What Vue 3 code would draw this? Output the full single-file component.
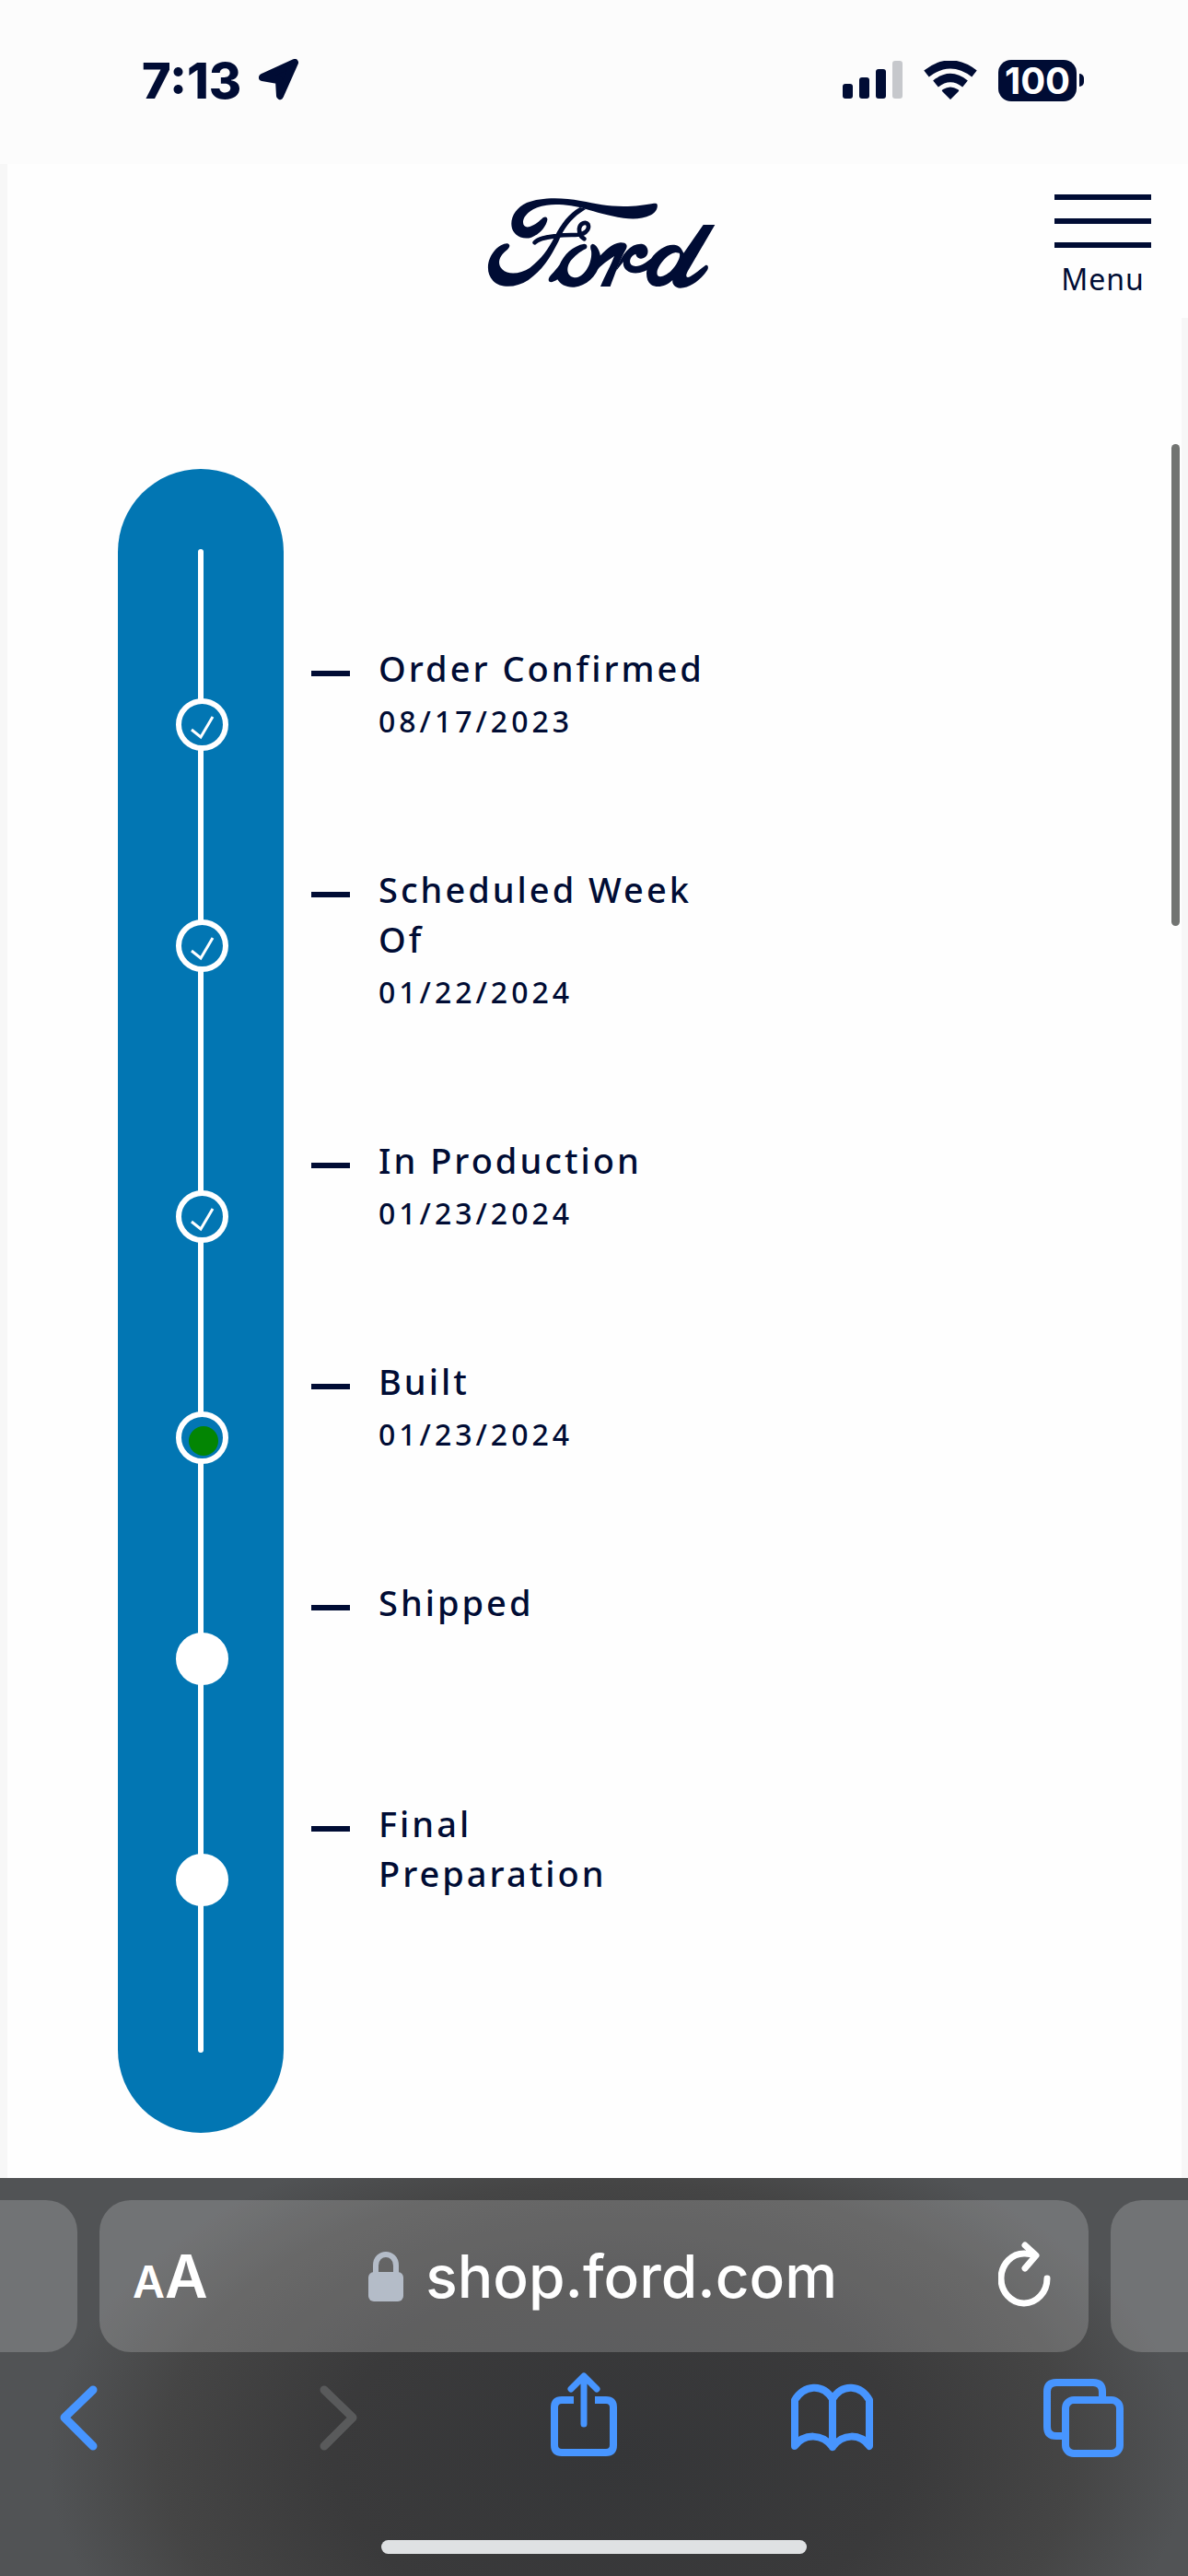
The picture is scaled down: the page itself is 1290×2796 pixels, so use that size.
<script setup>
const steps = [
  { title: 'Order Confirmed', date: '08/17/2023', state: 'done' },
  { title: 'Scheduled Week\nOf', date: '01/22/2024', state: 'done' },
  { title: 'In Production', date: '01/23/2024', state: 'done' },
  { title: 'Built', date: '01/23/2024', state: 'current' },
  { title: 'Shipped', date: '', state: 'todo' },
  { title: 'Final\nPreparation', date: '', state: 'todo' },
]
</script>

<template>
  <div class="phone">
    <div class="status">
      <div class="clock">
        <span>7:13</span>
        <svg class="location" viewBox="0 0 46 46" aria-hidden="true">
          <path d="M5 20 L40 4 L24 40 L23 23 Z M5 20 L22 23" />
        </svg>
      </div>
      <div class="indicators">
        <svg width="65" height="42" viewBox="0 0 65 42" aria-hidden="true">
          <rect x="0" y="25" width="11" height="16" rx="3" />
          <rect x="18" y="18" width="11" height="23" rx="3" />
          <rect x="36" y="9" width="11" height="32" rx="3" />
          <rect x="54" y="0" width="11" height="41" rx="3" fill="#c6c8cc" />
        </svg>
        <svg width="58" height="42" viewBox="0 0 58 42" aria-hidden="true">
          <path d="M29 42 L20 33 Q19 32 21 31 Q29 26 37 31 Q39 32 38 33 Z" />
          <path d="M13 25 Q29 12 45 25" class="wave" />
          <path d="M3 14 Q29 -6 55 14" class="wave" />
        </svg>
        <div class="battery"><span class="charge">100</span><i class="nub"></i></div>
      </div>
    </div>

    <main class="page">
      <header class="header">
        <a class="logo" href="#" aria-label="Ford">
          <svg width="248" height="100" viewBox="86 70 744 300" aria-hidden="true">
            <path d="M640 94 C643 108 632 122 620 128 C590 142 560 142 530 138 C480 130 440 118 405 108 C370 98 320 91 280 96 C235 101 203 128 203 152 C203 165 213 170 225 166 C245 160 255 148 268 137 C276 131 283 135 282 144 C278 165 258 190 230 201 C205 210 175 197 167 172 C158 140 178 105 215 88 C260 70 330 70 390 82 C440 91 480 100 530 100 C570 100 600 95 625 91 C633 90 639 90 640 94Z" />
            <path d="M388 103 C350 125 325 160 305 200 C285 240 262 272 225 300 C195 320 155 325 135 305 C117 287 125 262 148 244 C158 236 163 226 155 222 C145 218 125 228 112 242 C85 272 80 315 105 342 C130 368 180 366 220 340 C265 308 290 270 318 215 C335 175 355 140 408 108Z" />
            <path class="thread" d="M241 218 C255 202 285 200 315 196 C350 190 375 196 395 190 C412 184 420 170 414 158 C407 148 388 156 386 172 C385 188 392 200 402 206" />
            <path d="M402 222 C365 228 335 258 322 290 C305 315 285 328 286 340 C288 350 300 348 315 338 C325 355 345 365 370 363 C410 358 440 330 455 285 C460 255 445 225 430 222 C420 224 422 235 425 245 C430 280 405 330 375 332 C345 332 340 300 360 275 C378 255 395 243 408 238 C414 232 412 222 402 222Z" />
            <path d="M445 270 C470 245 490 222 520 218 C540 217 545 228 538 240 C520 270 500 325 487 361 L455 361 C470 325 490 290 500 262 C480 275 460 290 440 310Z" />
            <path d="M506 310 C525 250 555 220 590 222 C612 226 616 255 600 266 C588 275 572 268 570 255 C550 262 545 285 560 293 C580 300 600 285 620 270 L622 296 C600 318 560 325 540 308 C530 300 528 286 530 280Z" />
            <path fill-rule="evenodd" d="M790 160 L828 160 L740 310 C730 328 735 335 748 328 C770 315 785 300 797 292 C806 288 808 300 803 308 C785 335 750 366 715 366 C695 364 688 350 690 340 C670 360 640 368 620 355 C600 340 600 300 620 270 C640 240 675 220 700 226 C715 230 720 240 726 252Z M700 250 C670 255 635 300 640 322 C645 335 665 328 685 310 C705 290 718 262 712 252Z" />
          </svg>
        </a>
        <button class="menu" type="button">
          <span class="bars"><i></i><i></i><i></i></span>
          <span>Menu</span>
        </button>
      </header>

      <section class="content">
        <div class="timeline">
          <div class="rail"><div class="line"></div></div>
          <ol class="steps">
            <li v-for="step in steps" :key="step.title" class="step">
              <span class="marker" :class="step.state">
                <svg v-if="step.state === 'done'" width="45" height="45" viewBox="6 6 45 45" aria-hidden="true">
                  <path d="M17 34 L27 42 L40 20" />
                </svg>
                <svg v-else-if="step.state === 'current'" width="45" height="45" viewBox="6 6 45 45" aria-hidden="true">
                  <circle cx="30" cy="32" r="16" />
                </svg>
              </span>
              <i class="dash"></i>
              <div class="label">
                <h2>{{ step.title }}</h2>
                <time v-if="step.date">{{ step.date }}</time>
              </div>
            </li>
          </ol>
        </div>
        <div class="scrollbar"></div>
      </section>
    </main>

    <footer class="browser">
      <div class="tabs">
        <div class="peek left"></div>
        <div class="address">
          <button class="text-size" type="button" aria-label="Page settings">
            <span class="small">A</span><span>A</span>
          </button>
          <div class="site">
            <svg width="38" height="54" viewBox="0 0 38 54" aria-hidden="true">
              <rect x="0" y="22" width="38" height="32" rx="6" fill="#b4bcc8" />
              <path d="M8 24 V15 C8 -1 30 -1 30 15 V24" fill="none" stroke="#b4bcc8" stroke-width="6" />
            </svg>
            <span>shop.ford.com</span>
          </div>
          <button class="reload" type="button" aria-label="Reload">
            <svg width="58" height="76" viewBox="0 0 58 76" aria-hidden="true">
              <path d="M39 15 C35 13 32 13 29 13 A25 27 0 1 0 53 40 M29 4 L41 15 L29 29" />
            </svg>
          </button>
        </div>
        <div class="peek right"></div>
      </div>
      <nav class="toolbar">
        <button type="button" aria-label="Back">
          <svg viewBox="0 0 90 100" aria-hidden="true"><path class="thick" d="M61 23 L30 53 L61 84" /></svg>
        </button>
        <button type="button" aria-label="Forward" disabled>
          <svg viewBox="0 0 90 100" aria-hidden="true"><path class="thick" d="M39 23 L70 53 L39 84" /></svg>
        </button>
        <button type="button" aria-label="Share">
          <svg viewBox="0 0 90 100" aria-hidden="true">
            <path d="M37 34 H24 Q16 34 16 42 V83 Q16 91 24 91 H72 Q80 91 80 83 V42 Q80 34 72 34 H60" class="flat" />
            <path d="M48 60 V9 M34 22 L48 8 L62 22" class="arrow" />
          </svg>
        </button>
        <button type="button" aria-label="Bookmarks">
          <svg viewBox="0 0 90 100" aria-hidden="true">
            <path d="M46 85 V33 C35 15 15 18 5 34 V84 C15 70 35 70 46 85 C57 70 76 70 86 84 V34 C77 18 57 15 46 33" />
          </svg>
        </button>
        <button type="button" aria-label="Tabs">
          <svg viewBox="0 0 90 100" aria-hidden="true">
            <path d="M24 73 H16 Q6 73 6 63 V25 Q6 15 16 15 H56 Q66 15 66 25 V34" class="flat" />
            <rect x="26" y="34" width="59" height="58" rx="9" />
          </svg>
        </button>
      </nav>
      <div class="home"></div>
    </footer>
  </div>
</template>

<style>
body {
  margin: 0;
  background: #fefefe;
}
</style>

<style scoped>
.phone {
  display: flex;
  flex-direction: column;
  min-height: 100vh;
  color: #000c34;
  font-family: "Noto Sans", "Open Sans", sans-serif;
}
button {
  padding: 0;
  border: 0;
  background: none;
  color: inherit;
  font: inherit;
  cursor: pointer;
}
svg {
  display: block;
  flex: none;
}
.status {
  display: flex;
  justify-content: space-between;
  align-items: center;
  box-sizing: border-box;
  height: 178px;
  padding: 0 113px 4px 154px;
  background: #fcfcfc;
  font-family: Inter, sans-serif;
  font-weight: 800;
  font-size: 54px;
}
.clock {
  display: flex;
  align-items: center;
  gap: 18px;
}
.location {
  width: 46px;
  height: 46px;
  fill: #000c34;
  stroke: #000c34;
  stroke-width: 8;
  stroke-linejoin: round;
}
.indicators {
  display: flex;
  align-items: center;
  gap: 23px;
  fill: #000c34;
}
.wave {
  fill: none;
  stroke: #000c34;
  stroke-width: 9;
}
.battery {
  display: flex;
  align-items: center;
  gap: 3px;
}
.charge {
  width: 85px;
  border-radius: 14px;
  background: #000c34;
  color: #fff;
  font-size: 40px;
  font-weight: 700;
  line-height: 45px;
  text-align: center;
}
.nub {
  width: 5px;
  height: 14px;
  border-radius: 0 5px 5px 0;
  background: #000c34;
}
.page {
  flex: 1;
  display: flex;
  flex-direction: column;
  border-left: 8px solid #f7f7f7;
}
.header {
  display: grid;
  grid-template-columns: 1fr auto 1fr;
  align-items: start;
  box-sizing: border-box;
  height: 167px;
  padding: 33px 40px 0 47px;
  background: #fefefe;
}
.logo {
  grid-column: 2;
  padding-top: 3px;
}
.logo svg {
  fill: #000c34;
}
.thread {
  fill: none;
  stroke: #000c34;
  stroke-width: 14;
  stroke-linecap: round;
}
.menu {
  justify-self: end;
  display: flex;
  flex-direction: column;
  align-items: center;
  gap: 12px;
  width: 105px;
  font-size: 32px;
  line-height: 44px;
  letter-spacing: 1px;
}
.bars {
  display: flex;
  flex-direction: column;
  gap: 20px;
  align-self: stretch;
}
.bars i {
  height: 6px;
  background: #000c34;
}
.content {
  flex: 1;
  position: relative;
  padding: 164px 120px 49px;
  border-right: 7px solid #f7f7f7;
}
.timeline {
  display: grid;
}
.rail,
.steps {
  grid-area: 1 / 1;
}
.rail {
  display: flex;
  justify-content: center;
  box-sizing: border-box;
  width: 180px;
  padding: 87px 0;
  border-radius: 90px;
  background: #0276b3;
}
.line {
  width: 6px;
  border-radius: 3px;
  background: #fff;
}
.steps {
  margin: 0;
  padding: 191px 0 121px 63px;
  list-style: none;
}
.step {
  display: flex;
  align-items: flex-start;
  min-height: 240px;
}
.marker {
  box-sizing: border-box;
  width: 57px;
  height: 57px;
  margin: 58px 90px 0 0;
  border: 6px solid #fff;
  border-radius: 50%;
  background: #0276b3;
}
.marker.todo {
  background: #fff;
}
.marker path {
  fill: none;
  stroke: #fff;
  stroke-width: 3;
}
.marker circle {
  fill: #038503;
}
.dash {
  width: 42px;
  height: 6px;
  margin: 28px 31px 0 0;
  background: #000c34;
}
.label {
  margin-top: -2px;
  padding-bottom: 130px;
}
.label h2 {
  margin: 0;
  font-size: 38px;
  font-weight: 500;
  line-height: 54px;
  letter-spacing: 3px;
  white-space: pre-line;
}
.label time {
  display: block;
  margin-top: 4px;
  font-size: 32px;
  font-weight: 500;
  line-height: 54px;
  letter-spacing: 4px;
}
.scrollbar {
  position: absolute;
  top: 137px;
  right: 2px;
  width: 9px;
  height: 523px;
  border-radius: 5px;
  background: #727472;
}
.browser {
  display: flex;
  flex-direction: column;
  padding: 24px 0;
  background: radial-gradient(ellipse 48% 86% at 52% 70%, #353638 0%, #3a3a3b 50%, #454545 80%, #515355 100%);
}
.tabs {
  display: flex;
  gap: 24px;
  height: 165px;
}
.tabs > div {
  background: rgba(255, 255, 255, 0.19);
}
.peek {
  flex: 0 0 84px;
}
.peek.left {
  border-radius: 0 34px 34px 0;
}
.peek.right {
  border-radius: 34px 0 0 34px;
}
.address {
  flex: 1;
  display: flex;
  justify-content: space-between;
  align-items: center;
  padding: 0 40px 0 36px;
  border-radius: 34px;
  color: #fff;
  font-family: Inter, sans-serif;
  font-size: 64px;
  font-weight: 500;
}
.text-size {
  display: flex;
  align-items: baseline;
  font-weight: 600;
}
.text-size .small {
  font-size: 48px;
}
.site {
  display: flex;
  align-items: center;
  gap: 24px;
}
.reload path {
  fill: none;
  stroke: #fff;
  stroke-width: 7;
  stroke-linecap: round;
  stroke-linejoin: round;
}
.toolbar {
  display: flex;
  justify-content: space-between;
  padding: 18px 69px 0 40px;
}
.toolbar svg {
  width: 90px;
  height: 100px;
  fill: none;
  stroke: #4795ff;
  stroke-width: 8;
  stroke-linecap: round;
  stroke-linejoin: round;
}
.toolbar button:disabled svg {
  stroke: #595a5b;
}
.toolbar .thick {
  stroke-width: 9;
}
.toolbar .flat {
  stroke-linecap: butt;
}
.toolbar .arrow {
  stroke-width: 7;
}
.home {
  align-self: center;
  width: 462px;
  height: 15px;
  margin-top: 86px;
  border-radius: 8px;
  background: #dfe1e3;
}
</style>
